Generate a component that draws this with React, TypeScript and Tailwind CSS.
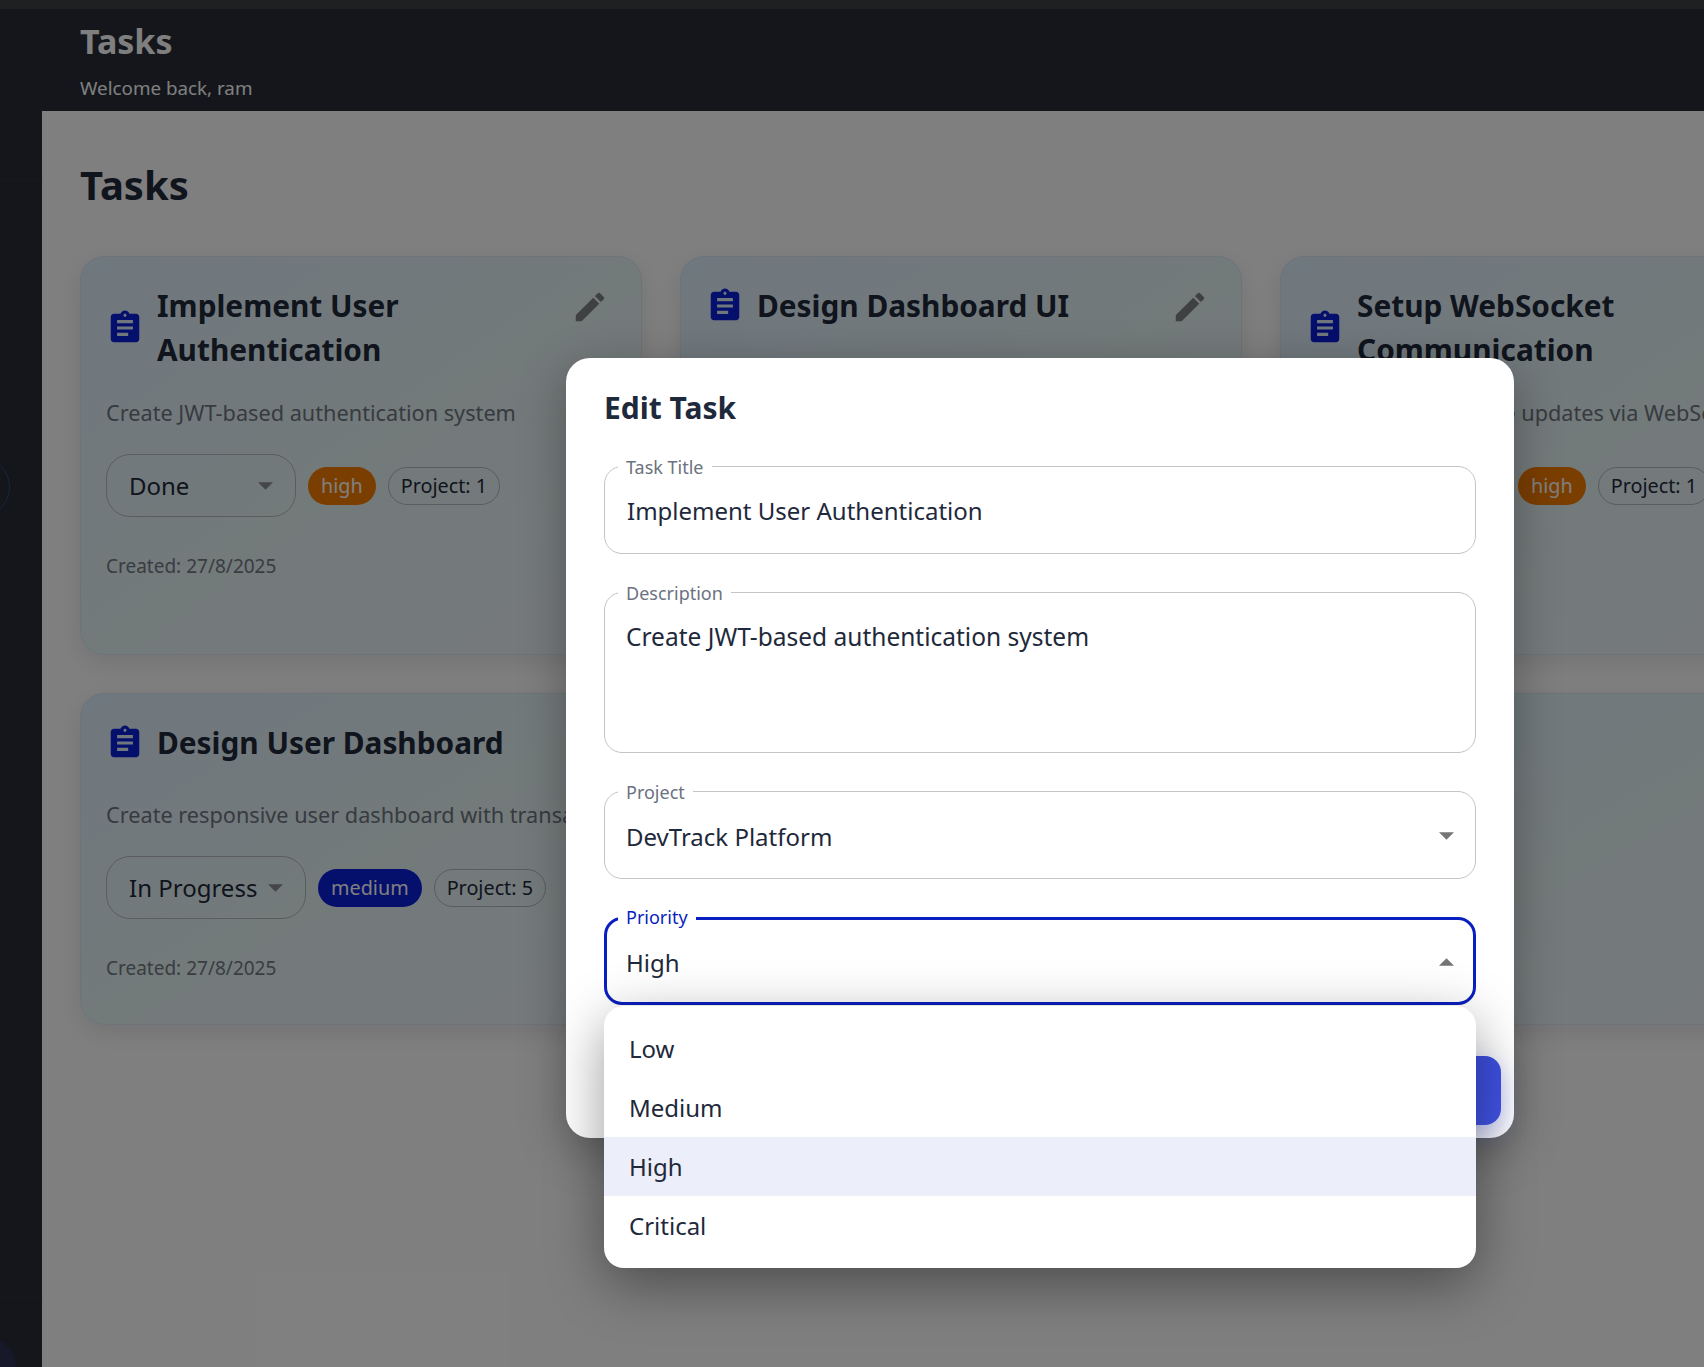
const AssignIcon = ({ className }: { className?: string }) => (
  <svg viewBox="0 0 24 24" className={className} fill="currentColor">
    <path d="M19 3h-4.18C14.4 1.84 13.3 1 12 1c-1.3 0-2.4.84-2.82 2H5c-1.1 0-2 .9-2 2v14c0 1.1.9 2 2 2h14c1.1 0 2-.9 2-2V5c0-1.1-.9-2-2-2zm-7 0c.55 0 1 .45 1 1s-.45 1-1 1-1-.45-1-1 .45-1 1-1zm2 14H7v-2h7v2zm3-4H7v-2h10v2zm0-4H7V7h10v2z" />
  </svg>
);

const EditIcon = () => (
  <svg viewBox="0 0 24 24" className="mr-[7px] mt-[5px] h-[38px] w-[38px] shrink-0 text-[#7e8184]" fill="currentColor">
    <path d="M3 17.25V21h3.75L17.81 9.94l-3.75-3.75L3 17.25zM20.71 7.04c.39-.39.39-1.02 0-1.41l-2.34-2.34a.9959.9959 0 0 0-1.41 0l-1.83 1.83 3.75 3.75 1.83-1.83z" />
  </svg>
);

const Arrow = ({ up, className }: { up?: boolean; className?: string }) => (
  <svg viewBox="0 0 16 8" className={className} fill="currentColor">
    <path d={up ? "M0 8 8 0l8 8z" : "M0 0l8 8 8-8z"} />
  </svg>
);

type Task = {
  title: string;
  desc?: string;
  status?: string;
  statusW?: string;
  priority?: string;
  project?: string;
  twoLine?: boolean;
  height: string;
};

const tasks: Task[] = [
  {
    title: "Implement User Authentication",
    desc: "Create JWT-based authentication system",
    status: "Done",
    statusW: "w-[190px]",
    priority: "high",
    project: "Project: 1",
    twoLine: true,
    height: "h-[399px]",
  },
  { title: "Design Dashboard UI", height: "h-[399px]" },
  {
    title: "Setup WebSocket Communication",
    desc: "Implement real-time updates via WebSocket",
    status: "In Progress",
    statusW: "w-[200px]",
    priority: "high",
    project: "Project: 1",
    twoLine: true,
    height: "h-[399px]",
  },
  {
    title: "Design User Dashboard",
    desc: "Create responsive user dashboard with transaction history",
    status: "In Progress",
    statusW: "w-[200px]",
    priority: "medium",
    project: "Project: 5",
    height: "h-[332px]",
  },
];

const cardClass =
  "rounded-[24px] border border-[#dbe7f2] bg-gradient-to-br from-[#dff0fe] via-[#e6f4f5] to-[#eef3f8] shadow-[0_8px_24px_rgba(0,0,0,0.1)]";

const TaskCard = ({ task }: { task: Task }) => (
  <div className={`${task.height} ${cardClass} px-[25px] pt-[26px]`}>
    <div className="flex items-start">
      <AssignIcon className="h-[38px] w-[38px] shrink-0 self-center text-[#0a1ed8]" />
      <h3 className={`ml-[13px] mt-px flex-1 pr-[40px] text-[29.8px] leading-[44px] font-bold text-[#1e293b] ${task.twoLine ? "" : "whitespace-nowrap"}`}>
        {task.title}
      </h3>
      <EditIcon />
    </div>
    {task.desc && (
      <>
        <p className={`whitespace-nowrap text-[21.7px] leading-[30px] text-[#6f7680] ${task.twoLine ? "mt-[26px]" : "mt-[35px]"}`}>
          {task.desc}
        </p>
        <div className="mt-[26px] flex items-center gap-3">
          <div className={`${task.statusW} flex h-[63px] items-center justify-between rounded-[24px] border border-[#b5b9bd] pl-[22px] pr-[22px] text-[24px] text-[#1e293b]`}>
            {task.status}
            <Arrow className="h-[8px] w-[15px] text-[#8a8d90]" />
          </div>
          <span
            className={`flex h-[38px] items-center rounded-full px-[13px] text-[19.8px] text-white ${
              task.priority === "high" ? "bg-[#f57c00]" : "bg-[#0a1ed8]"
            }`}
          >
            {task.priority}
          </span>
          <span className="flex h-[38px] items-center rounded-full border border-[#b5b9bd] px-[12px] text-[19.8px] text-[#1e293b]">
            {task.project}
          </span>
        </div>
        <p className="mt-[36px] text-[19px] leading-[27px] text-[#737a84]">Created: 27/8/2025</p>
      </>
    )}
  </div>
);

const Field = ({
  label,
  focused,
  className,
  children,
}: {
  label: string;
  focused?: boolean;
  className: string;
  children: React.ReactNode;
}) => (
  <div
    className={`relative rounded-[18px] ${className} ${
      focused ? "border-[3px] border-[#0a1fc0]" : "border border-[#c4c4c4]"
    }`}
  >
    <span
      className={`absolute bg-white px-[8px] text-[18px] leading-[24px] whitespace-nowrap ${
        focused ? "left-[11px] top-[-15px] text-[#0a1fc0]" : "left-[13px] top-[-12px] text-[#6b7280]"
      }`}
    >
      {label}
    </span>
    {children}
  </div>
);

const EditModal = () => (
  <div className="absolute left-[566px] top-[358px] z-30 h-[780px] w-[948px] rounded-[24px] bg-white px-[38px] pt-[26px] shadow-[0_12px_48px_rgba(0,0,0,0.3)]">
    <h2 className="text-[30px] leading-[48px] font-bold text-[#1e293b]">Edit Task</h2>
    <div className="mt-[34px] flex flex-col">
      <Field label="Task Title" className="h-[88px]">
        <div className="pl-[22px] pt-[26px] text-[24px] leading-[36px] text-[#1e293b]">Implement User Authentication</div>
      </Field>
      <Field label="Description" className="mt-[38px] h-[161px]">
        <div className="pl-[21px] pt-[26px] text-[24.5px] leading-[36px] text-[#1e293b]">Create JWT-based authentication system</div>
      </Field>
      <Field label="Project" className="mt-[38px] h-[88px]">
        <div className="flex items-center justify-between pl-[21px] pr-[21px] pt-[27px] text-[24px] leading-[36px] text-[#1e293b]">
          DevTrack Platform
          <Arrow className="mb-[2px] h-[8px] w-[15px] text-[#757575]" />
        </div>
      </Field>
      <Field label="Priority" focused className="mt-[38px] h-[88px]">
        <div className="flex items-center justify-between pl-[19px] pr-[19px] pt-[25px] text-[24px] leading-[36px] text-[#1e293b]">
          High
          <Arrow up className="mb-[2px] h-[8px] w-[15px] text-[#757575]" />
        </div>
      </Field>
    </div>
    {/* Update button, mostly behind the open menu */}
    <button className="absolute right-[13px] bottom-[13px] h-[69px] w-[150px] rounded-[16px] bg-gradient-to-br from-[#394bdc] to-[#4154e6] shadow-[0_8px_24px_rgba(63,81,230,0.35)]" />
  </div>
);

const PriorityMenu = () => (
  <div className="absolute left-[604px] top-[1006px] z-40 w-[872px] rounded-[20px] bg-white py-[13px] text-[24px] text-[#1e293b] shadow-[0_16px_56px_rgba(0,0,0,0.4)]">
    {["Low", "Medium", "High", "Critical"].map((item) => (
      <div key={item} className={`flex h-[59px] items-center pl-[25px] pt-px ${item === "High" ? "bg-[#eceef9]" : ""}`}>
        {item}
      </div>
    ))}
  </div>
);

export default function App() {
  return (
    <div className="relative h-[1367px] w-[1704px] overflow-hidden bg-white font-['Noto_Sans',sans-serif]">
      <div className="flex h-full pt-[9px]">
        {/* sidebar, cut off on the left */}
        <aside className="relative w-[42px] shrink-0 border-r border-[#2c2f38] bg-[#282c36]">
          <div className="absolute left-0 top-[171px] h-px w-full bg-[#30333b]" />
          <div className="absolute left-[-50px] top-[448px] h-[60px] w-[60px] rounded-full border border-[#2f4a86]" />
          <div className="absolute left-0 top-[1288px] h-px w-full bg-[#30333b]" />
          <div className="absolute left-[-44px] top-[1328px] h-[60px] w-[60px] rounded-full bg-[#2e3052]" />
        </aside>
        <div className="flex min-w-0 flex-1 flex-col">
          <header className="h-[102px] shrink-0 bg-[#282c36] pl-[38px] pt-[8px]">
            <h1 className="text-[34px] leading-[48px] font-bold text-white">Tasks</h1>
            <p className="mt-[10px] text-[18.8px] leading-[27px] text-white">Welcome back, ram</p>
          </header>
          <main className="flex-1 pl-[38px] pt-[44px]">
            <h2 className="text-[40px] leading-[60px] font-bold text-[#1e293b]">Tasks</h2>
            <div className="mt-[41px] grid w-max grid-cols-[562px_562px_562px] items-start gap-x-[38px] gap-y-[38px]">
              {tasks.map((task) => (
                <TaskCard key={task.title} task={task} />
              ))}
              <div className={`h-[332px] ${cardClass}`} />
              <div className={`h-[332px] ${cardClass}`} />
            </div>
          </main>
        </div>
      </div>
      {/* dim layer */}
      <div className="absolute inset-0 z-20 bg-black/50" />
      <div className="absolute left-0 top-0 z-20 h-[9px] w-full bg-[#1f2022]" />
      <EditModal />
      <PriorityMenu />
    </div>
  );
}
